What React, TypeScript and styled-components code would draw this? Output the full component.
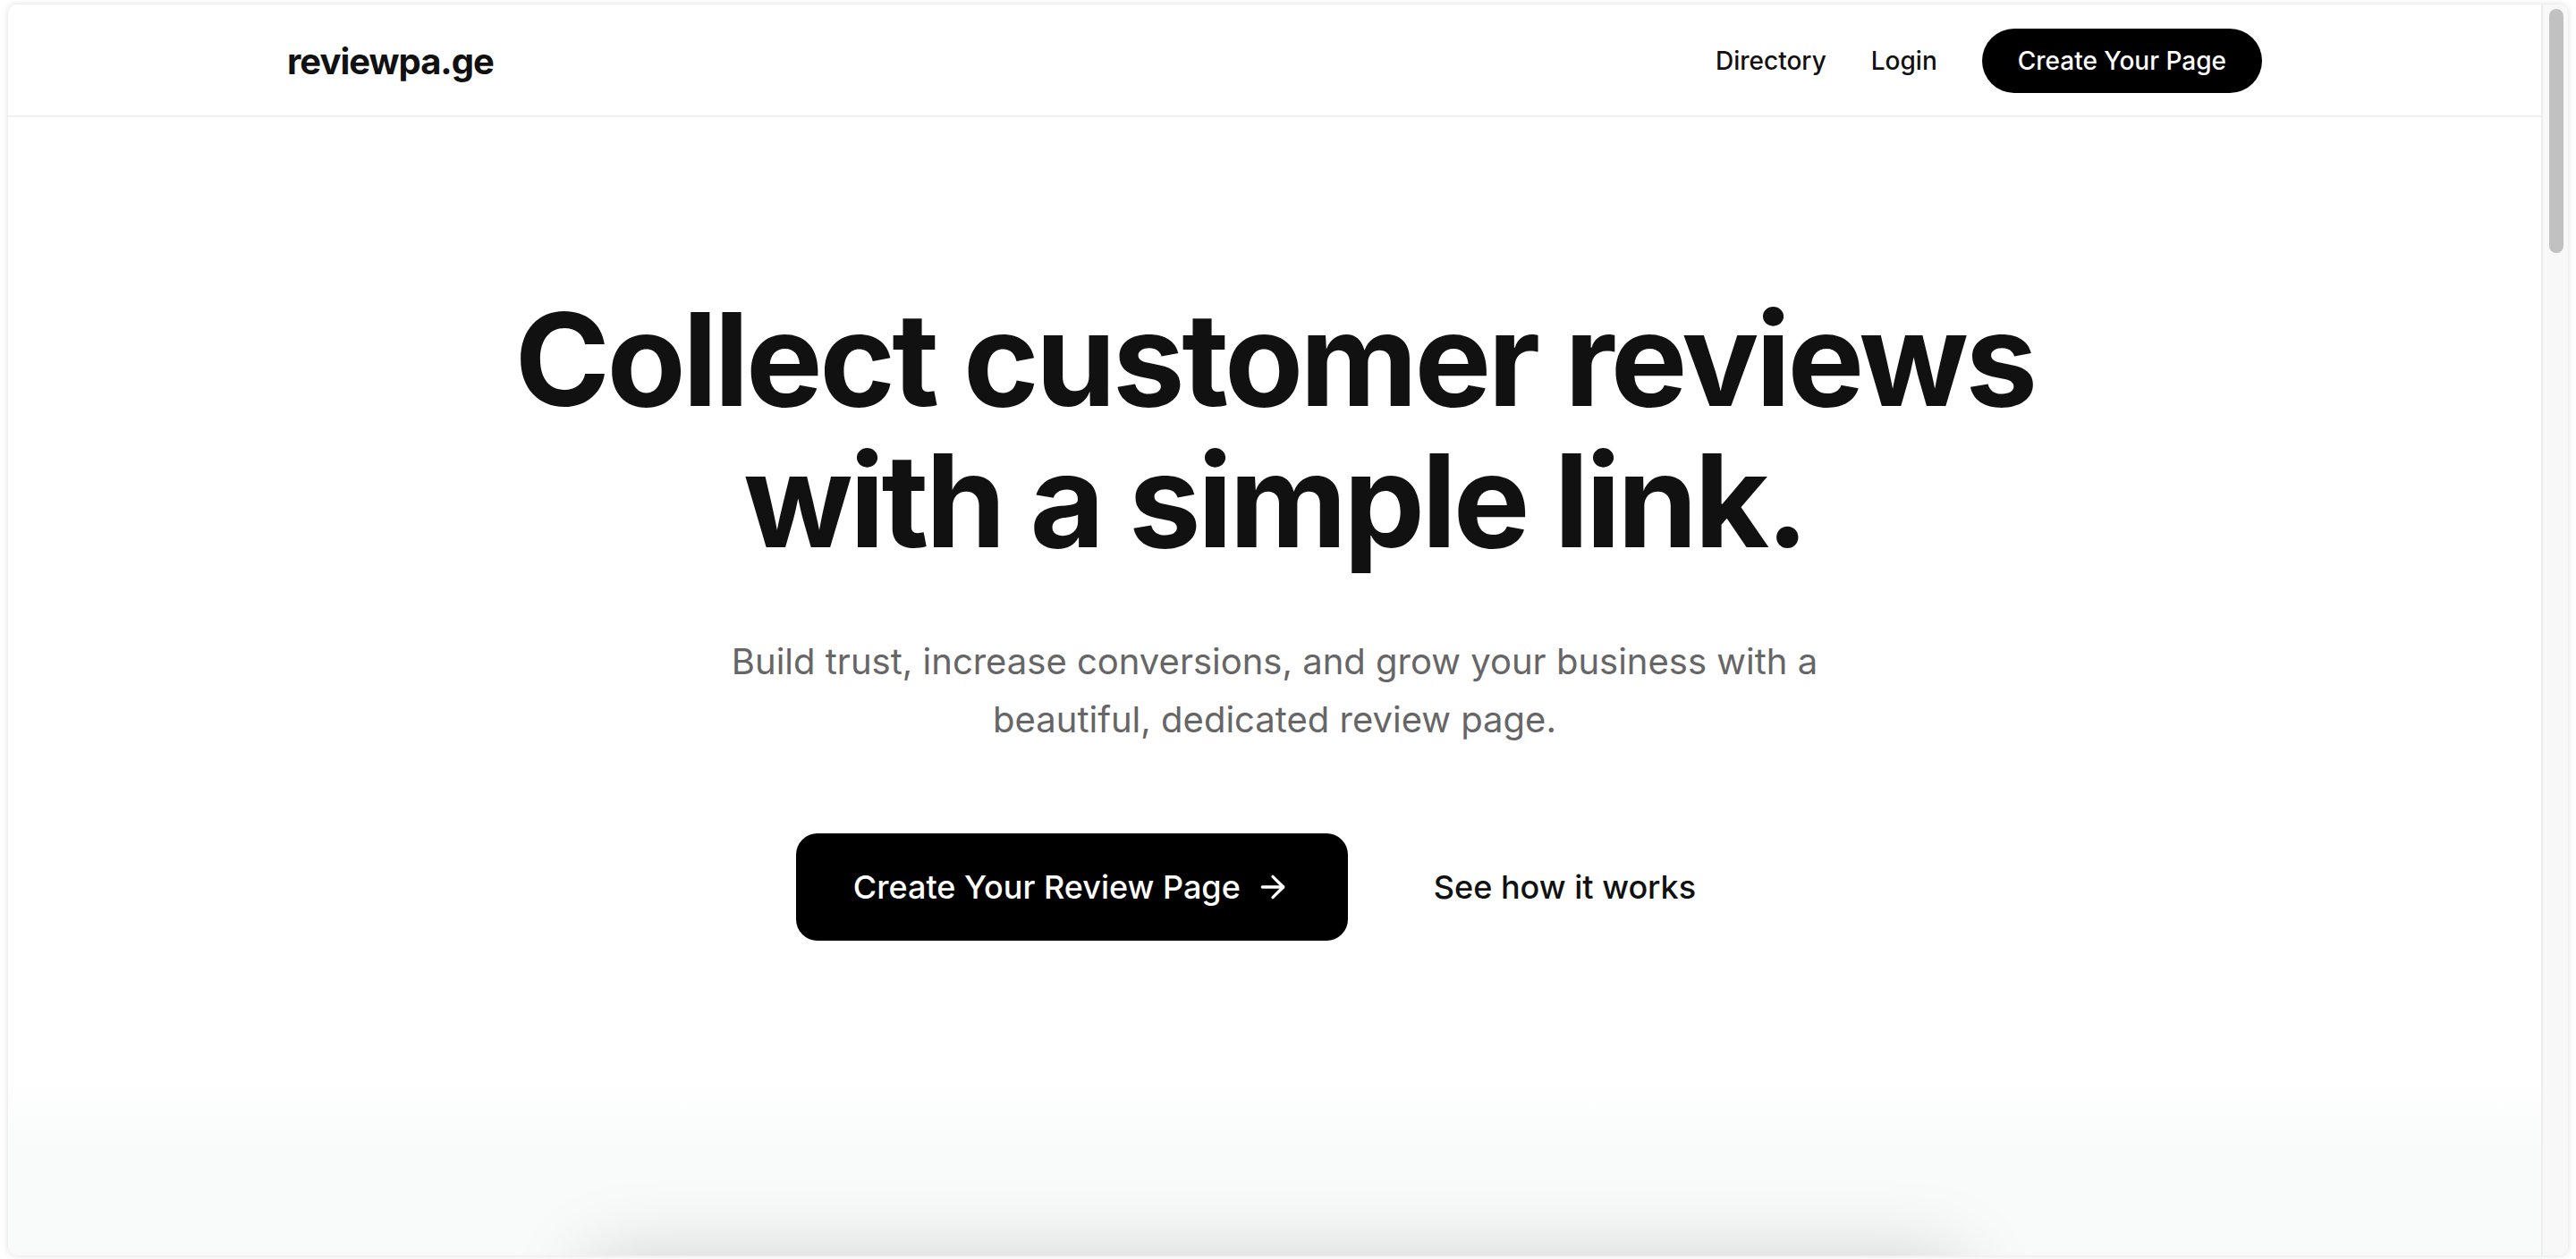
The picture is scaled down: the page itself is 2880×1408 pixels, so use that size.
import React from "react";
import styled, { createGlobalStyle } from "styled-components";
import { ArrowRight } from "lucide-react";

const Global = createGlobalStyle`
  html, body { margin: 0; padding: 0; background: #ffffff; }
  * { box-sizing: border-box; }
  body { font-family: Inter, "Noto Sans", "Liberation Sans", sans-serif; color: #111111; -webkit-font-smoothing: antialiased; }
`;

const Frame = styled.div`
  height: 1408px;
  padding: 5px 9px 4px 9px;
  display: flex;
  background: #ffffff;
`;

const Window = styled.div`
  flex: 1;
  display: flex;
  border-radius: 10px;
  overflow: hidden;
  background: #ffffff;
  box-shadow: 0 0 7px rgba(0, 0, 0, 0.14);
`;

const Viewport = styled.div`
  flex: 1;
  display: flex;
  flex-direction: column;
  overflow: hidden;
  min-width: 0;
`;

const Scrollbar = styled.div`
  width: 30px;
  flex-shrink: 0;
  border-left: 2px solid #ececec;
  background: #f8f8f8;
  padding: 5px 5px 0 7px;
`;

const Thumb = styled.div`
  height: 273px;
  border-radius: 8px;
  background: #c1c1c1;
`;

const Header = styled.header`
  height: 126px;
  flex-shrink: 0;
  border-bottom: 2px solid #f0f0f0;
  background: #ffffff;
`;

const HeaderInner = styled.div`
  max-width: 2304px;
  height: 100%;
  margin: 0 auto;
  padding: 2px 48px 0;
  display: flex;
  align-items: center;
  justify-content: space-between;
`;

const Logo = styled.a`
  font-size: 40px;
  font-weight: 700;
  letter-spacing: -0.025em;
  color: #111111;
  text-decoration: none;
`;

const Nav = styled.nav`
  display: flex;
  align-items: center;
  gap: 50px;
`;

const NavLink = styled.a`
  font-size: 28px;
  font-weight: 500;
  color: #111111;
  text-decoration: none;
`;

const NavButton = styled.a`
  height: 72px;
  padding: 0 40px;
  display: inline-flex;
  align-items: center;
  border-radius: 999px;
  background: #000000;
  color: #ffffff;
  font-size: 28px;
  font-weight: 500;
  text-decoration: none;
`;

const Hero = styled.section`
  padding: 192px 48px 0;
  display: flex;
  flex-direction: column;
  align-items: center;
  text-align: center;
`;

const Title = styled.h1`
  margin: 0;
  font-size: 144px;
  line-height: 1.1;
  font-weight: 700;
  letter-spacing: -0.025em;
  color: #111111;
`;

const Subtitle = styled.p`
  margin: 67px 0 0;
  max-width: 1344px;
  font-size: 40px;
  line-height: 1.625;
  font-weight: 400;
  color: #666666;
`;

const Actions = styled.div`
  margin-top: 95px;
  display: flex;
  align-items: center;
  gap: 32px;
`;

const PrimaryButton = styled.a`
  height: 120px;
  padding: 0 64px;
  display: inline-flex;
  align-items: center;
  gap: 16px;
  border-radius: 24px;
  background: #000000;
  color: #ffffff;
  font-size: 36px;
  font-weight: 500;
  text-decoration: none;
`;

const GhostButton = styled.a`
  height: 120px;
  padding: 0 64px;
  display: inline-flex;
  align-items: center;
  color: #111111;
  font-size: 36px;
  font-weight: 500;
  text-decoration: none;
`;

const Preview = styled.section`
  margin-top: 160px;
  padding: 204px 48px 0;
  display: flex;
  justify-content: center;
  background: linear-gradient(to bottom, #ffffff 0px, #f9fafa 70px, #f9fafa 100%);
`;

const PreviewCard = styled.div`
  width: 1536px;
  height: 800px;
  border-radius: 24px;
  background: #e6e6e6;
  box-shadow: 0 -8px 90px rgba(0, 0, 0, 0.18);
`;

export default function App() {
  return (
    <>
      <Global />
      <Frame>
        <Window>
          <Viewport>
            <Header>
              <HeaderInner>
                <Logo href="#">reviewpa.ge</Logo>
                <Nav>
                  <NavLink href="#">Directory</NavLink>
                  <NavLink href="#">Login</NavLink>
                  <NavButton href="#">Create Your Page</NavButton>
                </Nav>
              </HeaderInner>
            </Header>
            <Hero>
              <Title>
                Collect customer reviews
                <br />
                with a simple link.
              </Title>
              <Subtitle>
                Build trust, increase conversions, and grow your business with a beautiful, dedicated review page.
              </Subtitle>
              <Actions>
                <PrimaryButton href="#">
                  Create Your Review Page
                  <ArrowRight size={40} strokeWidth={2} />
                </PrimaryButton>
                <GhostButton href="#">See how it works</GhostButton>
              </Actions>
            </Hero>
            <Preview>
              <PreviewCard />
            </Preview>
          </Viewport>
          <Scrollbar>
            <Thumb />
          </Scrollbar>
        </Window>
      </Frame>
    </>
  );
}
